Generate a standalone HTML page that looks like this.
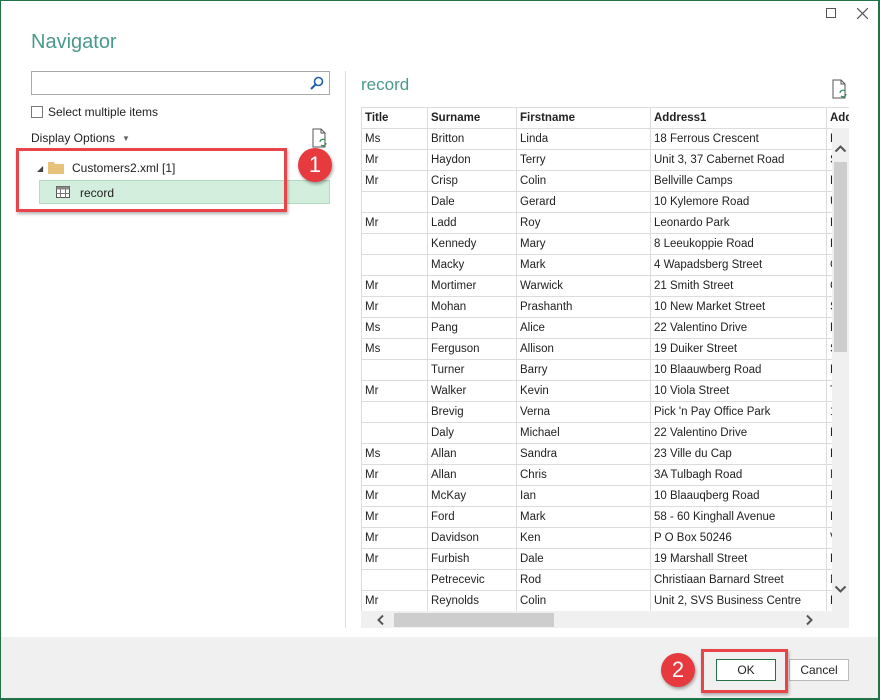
<!DOCTYPE html>
<html><head><meta charset="utf-8">
<style>
*{margin:0;padding:0;box-sizing:border-box}
body{width:880px;height:700px;overflow:hidden;background:#fff;font-family:"Segoe UI","Liberation Sans",sans-serif;font-size:12px;color:#222;position:relative}
.a{position:absolute}
.frame{left:0;top:0;width:880px;height:700px;border:1px solid #217346;border-width:1px 2px 2px 1px}
table{border-collapse:collapse;table-layout:fixed;font-size:11.5px}
td,th{border:1px solid #dcdcdc;height:21px;padding:0 0 0 3px;white-space:nowrap;overflow:hidden;text-align:left;color:#222}
th{font-weight:bold;background:#fff}
</style></head><body>
<div class="a" style="left:0;top:637px;width:880px;height:63px;background:#f0f0f0"></div>
<div class="a frame"></div>
<div class="a" style="left:826px;top:8px;width:10px;height:10px;border:1px solid #555"></div>
<svg class="a" style="left:857px;top:8px" width="11" height="11"><path d="M0 0L11 11M11 0L0 11" stroke="#555" stroke-width="1.2"/></svg>
<div class="a" style="left:31px;top:31px;font-size:20px;color:#4a9a8a;font-weight:normal">Navigator</div>
<div class="a" style="left:31px;top:71px;width:299px;height:24px;border:1px solid #aaa"></div>
<svg class="a" style="left:310px;top:76px" width="14" height="14"><circle cx="8.5" cy="5.5" r="4" fill="none" stroke="#1e5fa8" stroke-width="1.6"/><path d="M5.5 8.5L1 13" stroke="#1e5fa8" stroke-width="2"/></svg>
<div class="a" style="left:31px;top:106px;width:12px;height:12px;border:1px solid #777"></div>
<div class="a" style="left:48px;top:105px;font-size:12px">Select multiple items</div>
<div class="a" style="left:31px;top:131px;font-size:12px">Display Options</div>
<div class="a" style="left:122px;top:134px;font-size:8px;color:#666">▼</div>
<svg class="a" style="left:312px;top:128px" width="16" height="20"><path d="M1 1H9L13 5V19H1Z" fill="#fff" stroke="#555"/><path d="M9 1V5H13" fill="none" stroke="#555"/><path d="M8 14a3 3 0 0 1 5-2M14 15a3 3 0 0 1-5 2" fill="none" stroke="#2e8b57" stroke-width="1.2"/></svg>
<div class="a" style="left:37px;top:164px;font-size:8px;color:#444">◢</div>
<svg class="a" style="left:48px;top:160px" width="16" height="14"><path d="M0 2H6L7 4H16V14H0Z" fill="#e8c17a"/></svg>
<div class="a" style="left:72px;top:161px;font-size:12px">Customers2.xml [1]</div>
<div class="a" style="left:39px;top:180px;width:291px;height:24px;background:#d3eedc;border:1px solid #b5dcc2"></div>
<svg class="a" style="left:56px;top:186px" width="14" height="12"><rect x="0.5" y="0.5" width="13" height="11" fill="#fff" stroke="#555"/><rect x="0.5" y="0.5" width="13" height="3" fill="#888"/><path d="M0 7.5H14M4.5 3V12M9.5 3V12" stroke="#777"/></svg>
<div class="a" style="left:80px;top:186px;font-size:12px">record</div>
<div class="a" style="left:16px;top:148px;width:271px;height:64px;border:3px solid #e94549;box-shadow:1px 2px 3px rgba(0,0,0,.3)"></div>
<div class="a" style="left:298px;top:148px;width:34px;height:34px;border-radius:50%;background:#e63a3f;color:#fff;font-size:22px;text-align:center;line-height:34px;box-shadow:1px 2px 3px rgba(0,0,0,.35)">1</div>
<div class="a" style="left:345px;top:71px;width:1px;height:557px;background:#ddd"></div>
<div class="a" style="left:361px;top:75px;font-size:17px;color:#4a9a8a">record</div>
<svg class="a" style="left:832px;top:79px" width="16" height="20"><path d="M1 1H9L13 5V19H1Z" fill="#fff" stroke="#555"/><path d="M9 1V5H13" fill="none" stroke="#555"/><path d="M8 14a3 3 0 0 1 5-2M14 15a3 3 0 0 1-5 2" fill="none" stroke="#2e8b57" stroke-width="1.2"/></svg>
<div class="a" style="left:361px;top:107px;width:488px;height:504px;overflow:hidden">
<table style="width:520px">
<colgroup><col style="width:66px"><col style="width:89px"><col style="width:134px"><col style="width:176px"><col style="width:55px"></colgroup>
<tr><th>Title</th><th>Surname</th><th>Firstname</th><th>Address1</th><th>Address2</th></tr>
<tr><td>Ms</td><td>Britton</td><td>Linda</td><td>18 Ferrous Crescent</td><td>Bellville</td></tr>
<tr><td>Mr</td><td>Haydon</td><td>Terry</td><td>Unit 3, 37 Cabernet Road</td><td>Stellen</td></tr>
<tr><td>Mr</td><td>Crisp</td><td>Colin</td><td>Bellville Camps</td><td>Bellville</td></tr>
<tr><td></td><td>Dale</td><td>Gerard</td><td>10 Kylemore Road</td><td>Unit</td></tr>
<tr><td>Mr</td><td>Ladd</td><td>Roy</td><td>Leonardo Park</td><td>Edge</td></tr>
<tr><td></td><td>Kennedy</td><td>Mary</td><td>8 Leeukoppie Road</td><td>Llan</td></tr>
<tr><td></td><td>Macky</td><td>Mark</td><td>4 Wapadsberg Street</td><td>Gord</td></tr>
<tr><td>Mr</td><td>Mortimer</td><td>Warwick</td><td>21 Smith Street</td><td>Cape</td></tr>
<tr><td>Mr</td><td>Mohan</td><td>Prashanth</td><td>10 New Market Street</td><td>Sea</td></tr>
<tr><td>Ms</td><td>Pang</td><td>Alice</td><td>22 Valentino Drive</td><td>Kui</td></tr>
<tr><td>Ms</td><td>Ferguson</td><td>Allison</td><td>19 Duiker Street</td><td>Som</td></tr>
<tr><td></td><td>Turner</td><td>Barry</td><td>10 Blaauwberg Road</td><td>Blo</td></tr>
<tr><td>Mr</td><td>Walker</td><td>Kevin</td><td>10 Viola Street</td><td>Tab</td></tr>
<tr><td></td><td>Brevig</td><td>Verna</td><td>Pick 'n Pay Office Park</td><td>1</td></tr>
<tr><td></td><td>Daly</td><td>Michael</td><td>22 Valentino Drive</td><td>Kui</td></tr>
<tr><td>Ms</td><td>Allan</td><td>Sandra</td><td>23 Ville du Cap</td><td>Ed</td></tr>
<tr><td>Mr</td><td>Allan</td><td>Chris</td><td>3A Tulbagh Road</td><td>Mil</td></tr>
<tr><td>Mr</td><td>McKay</td><td>Ian</td><td>10 Blaauqberg Road</td><td>Blo</td></tr>
<tr><td>Mr</td><td>Ford</td><td>Mark</td><td>58 - 60 Kinghall Avenue</td><td>Ep</td></tr>
<tr><td>Mr</td><td>Davidson</td><td>Ken</td><td>P O Box 50246</td><td>V&amp;</td></tr>
<tr><td>Mr</td><td>Furbish</td><td>Dale</td><td>19 Marshall Street</td><td>Ho</td></tr>
<tr><td></td><td>Petrecevic</td><td>Rod</td><td>Christiaan Barnard Street</td><td>Ne</td></tr>
<tr><td>Mr</td><td>Reynolds</td><td>Colin</td><td>Unit 2, SVS Business Centre</td><td>Fo</td></tr>
<tr><td></td><td></td><td></td><td></td><td></td></tr>
</table></div>
<div class="a" style="left:832px;top:128px;width:17px;height:483px;background:#f0f0f0"></div>
<div class="a" style="left:834px;top:162px;width:13px;height:190px;background:#cdcdcd"></div>
<svg class="a" style="left:834px;top:144px" width="13" height="9"><path d="M1.5 7.5L6.5 2.5L11.5 7.5" fill="none" stroke="#555" stroke-width="2"/></svg>
<svg class="a" style="left:834px;top:585px" width="13" height="9"><path d="M1.5 1.5L6.5 6.5L11.5 1.5" fill="none" stroke="#555" stroke-width="2"/></svg>
<div class="a" style="left:361px;top:611px;width:488px;height:17px;background:#f0f0f0"></div>
<div class="a" style="left:394px;top:613px;width:160px;height:14px;background:#cdcdcd"></div>
<svg class="a" style="left:376px;top:614px" width="9" height="12"><path d="M7 1.5L2.5 6L7 10.5" fill="none" stroke="#555" stroke-width="2"/></svg>
<svg class="a" style="left:805px;top:614px" width="9" height="12"><path d="M2 1.5L6.5 6L2 10.5" fill="none" stroke="#555" stroke-width="2"/></svg>
<div class="a" style="left:716px;top:659px;width:60px;height:22px;border:1px solid #217346;background:#fff;text-align:center;line-height:20px;font-size:12px">OK</div>
<div class="a" style="left:789px;top:659px;width:60px;height:22px;border:1px solid #bbb;background:#fff;text-align:center;line-height:20px;font-size:12px">Cancel</div>
<div class="a" style="left:701px;top:649px;width:87px;height:44px;border:3px solid #e94549;box-shadow:1px 2px 3px rgba(0,0,0,.3)"></div>
<div class="a" style="left:661px;top:653px;width:34px;height:34px;border-radius:50%;background:#e63a3f;color:#fff;font-size:22px;text-align:center;line-height:34px;box-shadow:1px 2px 3px rgba(0,0,0,.35)">2</div>
</body></html>
